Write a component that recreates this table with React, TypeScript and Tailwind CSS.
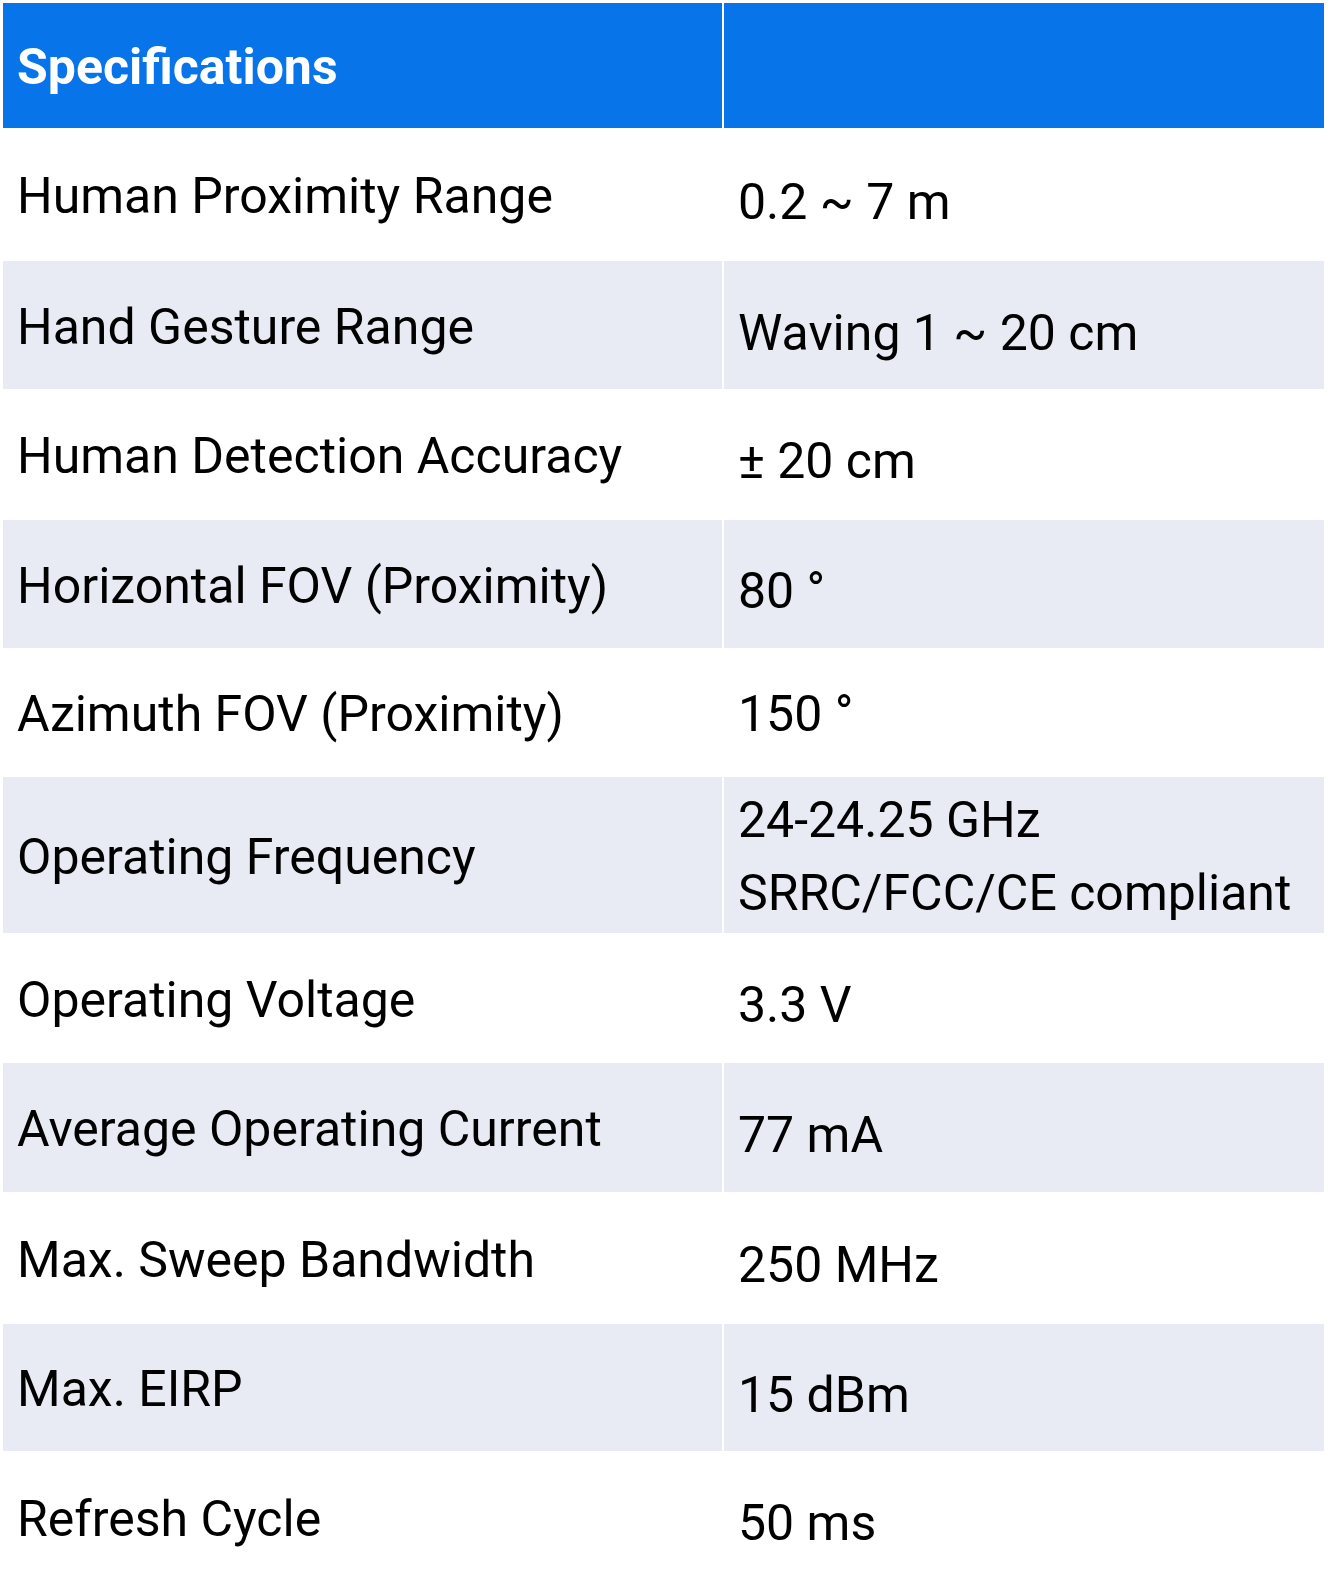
const specs = [
  { label: "Human Proximity Range", value: ["0.2 ~ 7 m"], h: "h-[129px]", vpad: "pt-[15px]" },
  { label: "Hand Gesture Range", value: ["Waving 1 ~ 20 cm"], h: "h-[128px]", vpad: "pt-[15px]" },
  { label: "Human Detection Accuracy", value: ["± 20 cm"], h: "h-[127px]", vpad: "pt-[13px]" },
  { label: "Horizontal FOV (Proximity)", value: ["80 °"], h: "h-[128px]", vpad: "pt-[13px]" },
  { label: "Azimuth FOV (Proximity)", value: ["150 °"], h: "h-[125px]", vpad: "pt-[3px]" },
  { label: "Operating Frequency", value: ["24-24.25 GHz", "SRRC/FCC/CE compliant"], h: "h-[156px]", vpad: "pt-[4px]" },
  { label: "Operating Voltage", value: ["3.3 V"], h: "h-[126px]", vpad: "pt-[14px]" },
  { label: "Average Operating Current", value: ["77 mA"], h: "h-[129px]", vpad: "pt-[14px]" },
  { label: "Max. Sweep Bandwidth", value: ["250 MHz"], h: "h-[128px]", vpad: "pt-[14px]" },
  { label: "Max. EIRP", value: ["15 dBm"], h: "h-[127px]", vpad: "pt-[14px]" },
  { label: "Refresh Cycle", value: ["50 ms"], h: "h-[128px]", vpad: "pt-[12px]" },
];

export default function App() {
  return (
    <div className="min-h-[1585px] bg-white pl-[3px] pt-[3px] font-['Roboto',_'Liberation_Sans',_sans-serif] text-black">
      <div className="flex w-[1321px] flex-col gap-[2px]">
        <div className="grid h-[125px] grid-cols-[719px_600px] gap-[2px]">
          <div className="flex items-center bg-[#0774ea] px-[14px] pt-[2px] text-[50px] font-bold leading-none text-white">
            Specifications
          </div>
          <div className="bg-[#0774ea]" />
        </div>

        {specs.map((row, i) => {
          const shade = i % 2 === 1 ? "bg-[#e8eaf4]" : "bg-white";
          const multi = row.value.length > 1;
          return (
            <div key={row.label} className={`grid grid-cols-[719px_600px] gap-[2px] ${row.h}`}>
              <div className={`flex items-center px-[14px] pt-[3px] text-[50px] leading-none ${shade}`}>
                {row.label}
              </div>
              <div className={`flex items-center px-[14px] text-[50px] ${shade}`}>
                <div className={`${row.vpad} ${multi ? "leading-[73px]" : "leading-none"}`}>
                  {row.value.map((v) => (
                    <div key={v}>{v}</div>
                  ))}
                </div>
              </div>
            </div>
          );
        })}
      </div>
    </div>
  );
}
